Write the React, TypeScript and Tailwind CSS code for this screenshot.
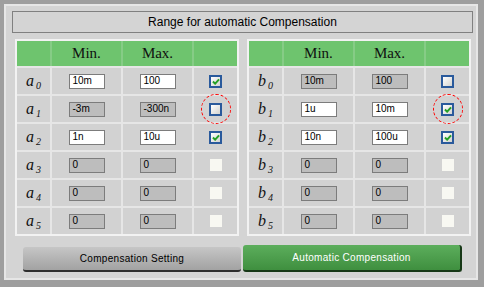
import React from 'react';

type Row = { min: string; max: string; on: boolean; state: 'checked' | 'unchecked' | 'disabled'; circled?: boolean };

const aRows: Row[] = [
  { min: '10m', max: '100', on: true, state: 'checked' },
  { min: '-3m', max: '-300n', on: false, state: 'unchecked', circled: true },
  { min: '1n', max: '10u', on: true, state: 'checked' },
  { min: '0', max: '0', on: false, state: 'disabled' },
  { min: '0', max: '0', on: false, state: 'disabled' },
  { min: '0', max: '0', on: false, state: 'disabled' },
];

const bRows: Row[] = [
  { min: '10m', max: '100', on: false, state: 'unchecked' },
  { min: '1u', max: '10m', on: true, state: 'checked', circled: true },
  { min: '10n', max: '100u', on: true, state: 'checked' },
  { min: '0', max: '0', on: false, state: 'disabled' },
  { min: '0', max: '0', on: false, state: 'disabled' },
  { min: '0', max: '0', on: false, state: 'disabled' },
];

function Field({ value, on }: { value: string; on: boolean }) {
  return (
    <div
      className={`w-[36px] h-[15px] border border-[#7c7c7c] flex items-center pl-[3px] text-[10px] leading-none text-black ${
        on ? 'bg-white' : 'bg-[#bdbdbd]'
      }`}
      style={{ fontFamily: '"Liberation Sans", Arial, sans-serif' }}
    >
      {value}
    </div>
  );
}

function Check({ state }: { state: Row['state'] }) {
  if (state === 'disabled') {
    return <div className="w-[12px] h-[12px] bg-[#f8f8f2]" />;
  }
  return (
    <div className="w-[13px] h-[13px] border-2 border-[#2a5a9c] bg-gradient-to-br from-white to-[#d4d4d0] flex items-center justify-center">
      {state === 'checked' && (
        <svg width="8" height="7" viewBox="0 0 9 8">
          <path d="M1 4 L3.5 6.5 L8 1.5" fill="none" stroke="#26a026" strokeWidth="2.2" />
        </svg>
      )}
    </div>
  );
}

function Panel({ letter, rows }: { letter: string; rows: Row[] }) {
  const serif = { fontFamily: '"Liberation Serif", "Times New Roman", serif' };
  return (
    <div className="w-[224px] border-2 border-[#f2f2f2] bg-[#e6e6e6] flex flex-col gap-[2px]">
      <div className="grid grid-cols-[33px_69px_69px_43px] gap-[2px] bg-[#86cc86] h-[25px]">
        <div className="bg-[#6ec46e]" />
        <div className="bg-[#6ec46e] flex items-center justify-center text-[15px] text-[#101010]" style={serif}>
          Min.
        </div>
        <div className="bg-[#6ec46e] flex items-center justify-center text-[15px] text-[#101010]" style={serif}>
          Max.
        </div>
        <div className="bg-[#6ec46e]" />
      </div>
      {rows.map((r, i) => (
        <div key={i} className="grid grid-cols-[33px_69px_69px_43px] gap-[2px] h-[26px]">
          <div className="bg-[#d2d2d2] flex items-center justify-center italic text-[16px] text-[#111]" style={serif}>
            <span>
              {letter}
              <sub className="text-[10px] ml-[2px]">{i}</sub>
            </span>
          </div>
          <div className="bg-[#d2d2d2] flex items-center justify-center">
            <Field value={r.min} on={r.on} />
          </div>
          <div className="bg-[#d2d2d2] flex items-center justify-center">
            <Field value={r.max} on={r.on} />
          </div>
          <div className="bg-[#d2d2d2] flex items-center justify-center relative">
            <Check state={r.state} />
            {r.circled && (
              <div className="absolute left-1/2 top-1/2 -translate-x-1/2 -translate-y-1/2 w-[30px] h-[30px] rounded-full border border-dashed border-[#ff0000]" />
            )}
          </div>
        </div>
      ))}
    </div>
  );
}

export default function App() {
  const sans = { fontFamily: '"Liberation Sans", Arial, sans-serif' };
  return (
    <div className="w-[484px] h-[287px] bg-[#9e9e9e] pt-[4px] pl-[4px] pr-[6px] pb-[7px]">
      <div className="h-full border-2 border-[#e6e6e6] bg-[#d4d4d4] flex flex-col">
        {/* Title */}
        <div
          className="mt-[5px] ml-[6px] w-[461px] h-[22px] border border-[#808080] flex items-center justify-center text-[12px] text-black"
          style={sans}
        >
          Range for automatic Compensation
        </div>

        {/* Tables */}
        <div className="mt-[6px] ml-[9px] flex gap-[8px]">
          <Panel letter="a" rows={aRows} />
          <Panel letter="b" rows={bRows} />
        </div>

        {/* Buttons */}
        <div className="mt-[9px] ml-[17px] flex items-end gap-[2px]" style={sans}>
          <div className="w-[218px] h-[25px] rounded-[3px] bg-gradient-to-b from-[#c6c6c6] to-[#a2a2a2] border-b-2 border-[#2e2e2e] flex items-center justify-center text-[10px] text-black tracking-[0.3px]">
            Compensation Setting
          </div>
          <div className="w-[219px] h-[27px] rounded-[3px] bg-gradient-to-b from-[#5cae5c] to-[#3f8f3f] border-b-2 border-r-2 border-[#173817] flex items-center justify-center text-[10px] text-white tracking-[0.3px]">
            Automatic Compensation
          </div>
        </div>
      </div>
    </div>
  );
}
